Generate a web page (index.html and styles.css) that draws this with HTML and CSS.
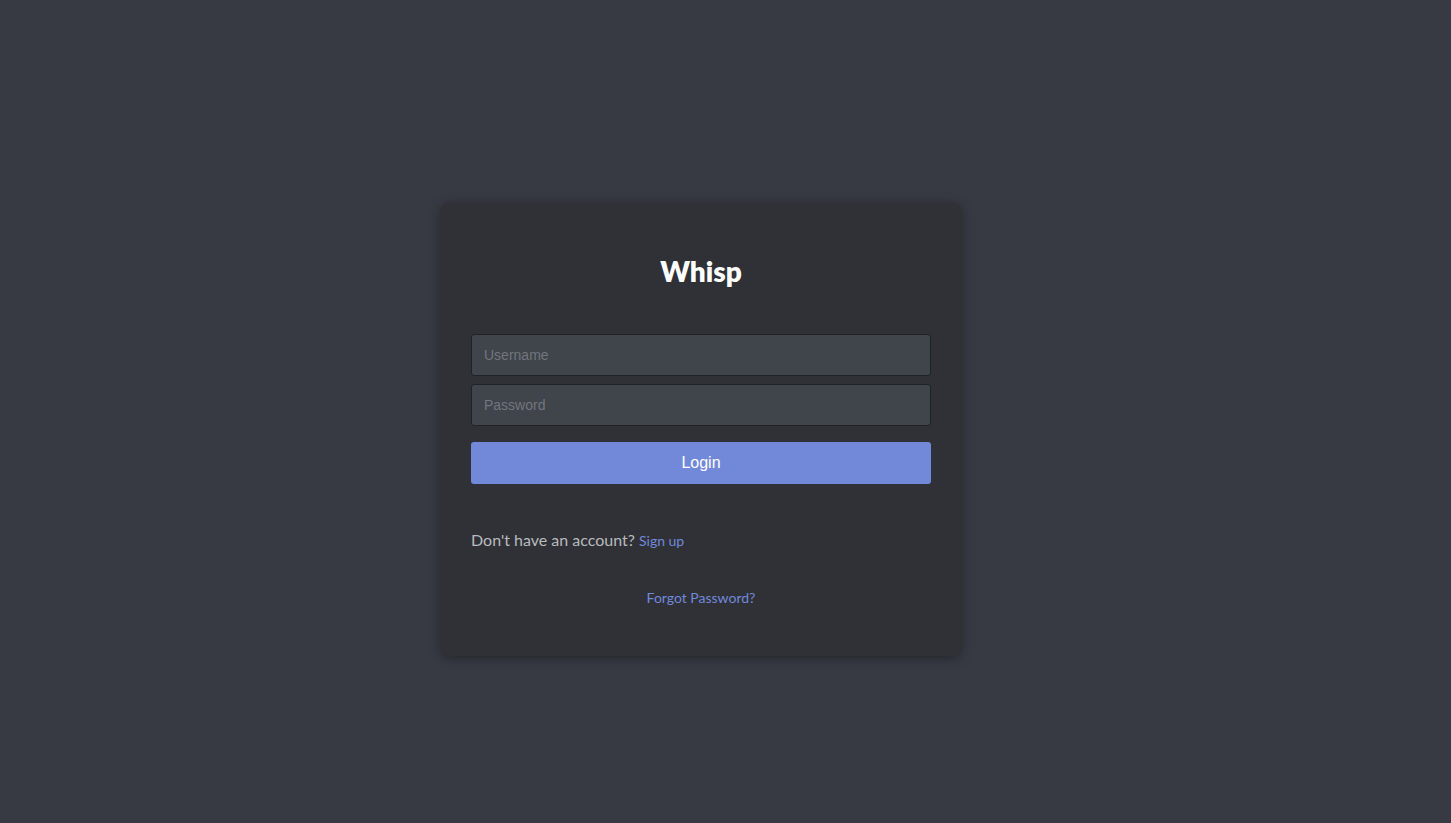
FILE: index.html
```html
<!DOCTYPE html>
<html lang="en">
<head>
<meta charset="utf-8">
<title>Whisp - Login</title>
<link rel="stylesheet" href="styles.css">
</head>
<body>
<main class="page">
  <section class="card">
    <h1 class="title">Whisp</h1>
    <form class="form">
      <input class="field" type="text" placeholder="Username">
      <input class="field" type="password" placeholder="Password">
      <button class="btn" type="button">Login</button>
    </form>
    <p class="signup">Don't have an account? <a class="link small" href="#">Sign up</a></p>
    <p class="forgot"><a class="link" href="#">Forgot Password?</a></p>
  </section>
</main>
</body>
</html>
```
FILE: styles.css
```css
html, body {
  margin: 0;
  padding: 0;
  background: #373a43;
}
.page {
  box-sizing: border-box;
  min-height: 823px;
  display: flex;
  justify-content: center;
  align-items: flex-start;
  padding: 203px 49px 0 0;
}
.card {
  width: 460px;
  padding: 30px;
  background: #2f3136;
  border-radius: 8px;
  box-shadow: 0 2px 12px rgba(0, 0, 0, 0.35);
  font-family: Lato, "Noto Sans", sans-serif;
}
.title {
  margin: 20px 0 45px;
  font-size: 28px;
  line-height: 36px;
  font-weight: 800;
  color: #ffffff;
  text-align: center;
}
.form {
  display: flex;
  flex-direction: column;
  gap: 8px;
  margin: 0;
}
.field {
  box-sizing: border-box;
  height: 42px;
  padding: 0 12px;
  background: #40444b;
  border: 1px solid #202225;
  border-radius: 3px;
  color: #dcddde;
  font-family: "Liberation Sans", Arial, sans-serif;
  font-size: 14px;
  outline: none;
}
.field::placeholder {
  color: #72767d;
}
.btn {
  margin-top: 8px;
  height: 42px;
  border: none;
  border-radius: 3px;
  background: #7289da;
  color: #ffffff;
  font-family: "Liberation Sans", Arial, sans-serif;
  font-size: 16px;
  cursor: pointer;
}
.signup {
  margin: 44px 0 0;
  font-size: 16px;
  line-height: 24px;
  color: #b9bbbe;
}
.forgot {
  margin: 35px 0 18px;
  font-size: 14px;
  line-height: 20px;
  text-align: center;
}
.link {
  color: #7289da;
  text-decoration: none;
}
.small {
  font-size: 14px;
}
```
